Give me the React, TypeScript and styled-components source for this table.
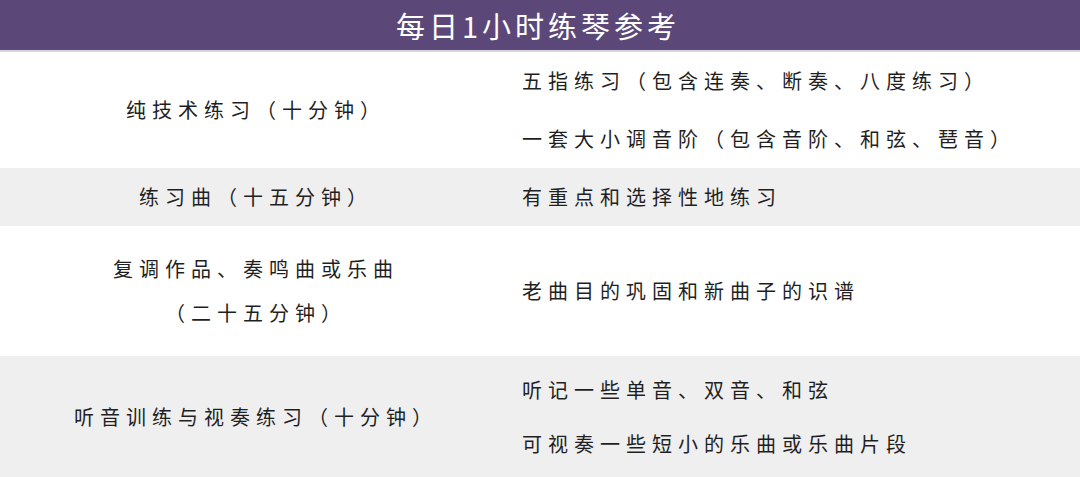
import React from 'react';
import styled, { createGlobalStyle } from 'styled-components';

const GlobalStyle = createGlobalStyle`
  html, body {
    margin: 0;
    padding: 0;
    background: #ffffff;
  }
  body {
    font-family: "Noto Sans CJK SC", "Noto Sans", sans-serif;
  }
`;

const Page = styled.div`
  width: 1080px;
  height: 477px;
  overflow: hidden;
  background: #ffffff;
`;

const TitleBar = styled.div`
  height: 50px;
  background: #5b4878;
  border-bottom: 2px solid #d9d2e2;
  display: flex;
  align-items: center;
  justify-content: center;
  color: #ffffff;
  font-size: 29px;
  letter-spacing: 4px;
  padding-right: 4px;
  box-sizing: content-box;
`;

const Table = styled.div`
  display: flex;
  flex-direction: column;
`;

const Row = styled.div<{ $h: number; $shade?: boolean }>`
  display: grid;
  grid-template-columns: 512px 1fr;
  height: ${p => p.$h}px;
  background: ${p => (p.$shade ? '#efeff0' : '#ffffff')};
`;

const LeftCell = styled.div`
  display: flex;
  flex-direction: column;
  align-items: center;
  justify-content: center;
  gap: 2px;
`;

const RightCell = styled.div`
  display: flex;
  flex-direction: column;
  justify-content: center;
  padding-left: 10px;
  gap: 2px;
`;

const Text = styled.div<{ $lh?: number }>`
  font-size: 20px;
  letter-spacing: 6px;
  color: #1f1f1f;
  line-height: ${p => p.$lh ?? 56}px;
  white-space: nowrap;
`;

const App: React.FC = () => {
  return (
    <Page>
      <GlobalStyle />
      <TitleBar>每日1小时练琴参考</TitleBar>
      <Table>
        <Row $h={116}>
          <LeftCell>
            <Text>纯技术练习（十分钟）</Text>
          </LeftCell>
          <RightCell>
            <Text>五指练习（包含连奏、断奏、八度练习）</Text>
            <Text>一套大小调音阶（包含音阶、和弦、琶音）</Text>
          </RightCell>
        </Row>
        <Row $h={58} $shade>
          <LeftCell>
            <Text>练习曲（十五分钟）</Text>
          </LeftCell>
          <RightCell>
            <Text>有重点和选择性地练习</Text>
          </RightCell>
        </Row>
        <Row $h={130}>
          <LeftCell>
            <Text $lh={42}>复调作品、奏鸣曲或乐曲</Text>
            <Text $lh={42}>（二十五分钟）</Text>
          </LeftCell>
          <RightCell>
            <Text>老曲目的巩固和新曲子的识谱</Text>
          </RightCell>
        </Row>
        <Row $h={121} $shade>
          <LeftCell>
            <Text>听音训练与视奏练习（十分钟）</Text>
          </LeftCell>
          <RightCell>
            <Text $lh={52}>听记一些单音、双音、和弦</Text>
            <Text $lh={52}>可视奏一些短小的乐曲或乐曲片段</Text>
          </RightCell>
        </Row>
      </Table>
    </Page>
  );
};

export default App;
